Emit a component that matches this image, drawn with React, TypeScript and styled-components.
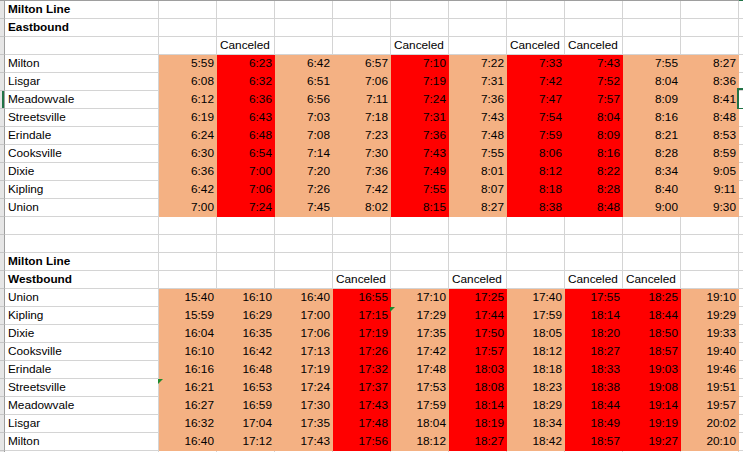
import styled, { createGlobalStyle } from "styled-components";

const GRID = "#d4d4d4";
const SALMON = "#f4b183";
const RED = "#ff0000";
const EXCEL_GREEN = "#217346";
const COLS = "5px 154px repeat(10, 58px) 1fr";

const GlobalStyle = createGlobalStyle`
  body {
    margin: 0;
    background: #fff;
    overflow: hidden;
  }
`;

const Sheet = styled.div`
  display: flex;
  flex-direction: column;
  width: 743px;
  height: 452px;
  overflow: hidden;
  font-family: "Liberation Sans", Arial, sans-serif;
  font-size: 11.8px;
  color: #000;
`;

const EdgeRow = styled.div`
  display: grid;
  grid-template-columns: 739px 1fr;
  height: 1px;
  flex: none;
`;

const EdgePart = styled.div<{ $active?: boolean }>`
  background: ${(p) => (p.$active ? EXCEL_GREEN : "#9e9e9e")};
`;

const Row = styled.div`
  display: grid;
  grid-template-columns: ${COLS};
  height: 18px;
  flex: none;
`;

const RowHead = styled.div<{ $active?: boolean }>`
  box-sizing: border-box;
  background: #e6e6e6;
  border-right: 1px solid #9e9e9e;
  border-bottom: 1px solid #c6c6c6;
  box-shadow: ${(p) => (p.$active ? `inset -2px 0 0 ${EXCEL_GREEN}` : "none")};
`;

const Cell = styled.div<{
  $fill?: string;
  $right?: boolean;
  $bold?: boolean;
  $flag?: boolean;
  $selected?: boolean;
}>`
  position: relative;
  box-sizing: border-box;
  height: 18px;
  padding: 0 2px 0 3px;
  background: ${(p) => p.$fill ?? "#fff"};
  border-right: 1px solid ${(p) => p.$fill ?? GRID};
  border-bottom: 1px solid ${(p) => p.$fill ?? GRID};
  text-align: ${(p) => (p.$right ? "right" : "left")};
  font-weight: ${(p) => (p.$bold ? 700 : 400)};
  line-height: 17px;
  white-space: nowrap;

  &::before {
    content: "";
    display: ${(p) => (p.$flag ? "block" : "none")};
    position: absolute;
    top: 0;
    left: -1px;
    border-top: 5px solid #1e8a2e;
    border-right: 5px solid transparent;
  }

  &::after {
    content: "";
    display: ${(p) => (p.$selected ? "block" : "none")};
    position: absolute;
    top: -3px;
    left: -2px;
    right: -4px;
    bottom: -2px;
    border: 2px solid ${EXCEL_GREEN};
  }
`;

type Block = {
  title: string;
  direction: string;
  canceled: number[];
  // westbound puts its "Canceled" labels on the direction row
  labelsOnDirection?: boolean;
  stops: [string, string[]][];
};

const eastbound: Block = {
  title: "Milton Line",
  direction: "Eastbound",
  canceled: [1, 4, 6, 7],
  stops: [
    ["Milton", ["5:59", "6:23", "6:42", "6:57", "7:10", "7:22", "7:33", "7:43", "7:55", "8:27"]],
    ["Lisgar", ["6:08", "6:32", "6:51", "7:06", "7:19", "7:31", "7:42", "7:52", "8:04", "8:36"]],
    ["Meadowvale", ["6:12", "6:36", "6:56", "7:11", "7:24", "7:36", "7:47", "7:57", "8:09", "8:41"]],
    ["Streetsville", ["6:19", "6:43", "7:03", "7:18", "7:31", "7:43", "7:54", "8:04", "8:16", "8:48"]],
    ["Erindale", ["6:24", "6:48", "7:08", "7:23", "7:36", "7:48", "7:59", "8:09", "8:21", "8:53"]],
    ["Cooksville", ["6:30", "6:54", "7:14", "7:30", "7:43", "7:55", "8:06", "8:16", "8:28", "8:59"]],
    ["Dixie", ["6:36", "7:00", "7:20", "7:36", "7:49", "8:01", "8:12", "8:22", "8:34", "9:05"]],
    ["Kipling", ["6:42", "7:06", "7:26", "7:42", "7:55", "8:07", "8:18", "8:28", "8:40", "9:11"]],
    ["Union", ["7:00", "7:24", "7:45", "8:02", "8:15", "8:27", "8:38", "8:48", "9:00", "9:30"]],
  ],
};

const westbound: Block = {
  title: "Milton Line",
  direction: "Westbound",
  canceled: [3, 5, 7, 8],
  labelsOnDirection: true,
  stops: [
    ["Union", ["15:40", "16:10", "16:40", "16:55", "17:10", "17:25", "17:40", "17:55", "18:25", "19:10"]],
    ["Kipling", ["15:59", "16:29", "17:00", "17:15", "17:29", "17:44", "17:59", "18:14", "18:44", "19:29"]],
    ["Dixie", ["16:04", "16:35", "17:06", "17:19", "17:35", "17:50", "18:05", "18:20", "18:50", "19:33"]],
    ["Cooksville", ["16:10", "16:42", "17:13", "17:26", "17:42", "17:57", "18:12", "18:27", "18:57", "19:40"]],
    ["Erindale", ["16:16", "16:48", "17:19", "17:32", "17:48", "18:03", "18:18", "18:33", "19:03", "19:46"]],
    ["Streetsville", ["16:21", "16:53", "17:24", "17:37", "17:53", "18:08", "18:23", "18:38", "19:08", "19:51"]],
    ["Meadowvale", ["16:27", "16:59", "17:30", "17:43", "17:59", "18:14", "18:29", "18:44", "19:14", "19:57"]],
    ["Lisgar", ["16:32", "17:04", "17:35", "17:48", "18:04", "18:19", "18:34", "18:49", "19:19", "20:02"]],
    ["Milton", ["16:40", "17:12", "17:43", "17:56", "18:12", "18:27", "18:42", "18:57", "19:27", "20:10"]],
  ],
};

// flagged cells (green error triangles): "direction:stop:column"
const flags = new Set(["Westbound:Kipling:4", "Westbound:Streetsville:0"]);
const selected = "Eastbound:Meadowvale";

const blanks = Array.from({ length: 10 });

const LabelRow = ({
  label,
  bold,
  canceled = [],
}: {
  label?: string;
  bold?: boolean;
  canceled?: number[];
}) => (
  <Row>
    <RowHead />
    <Cell $bold={bold}>{label}</Cell>
    {blanks.map((_, i) => (
      <Cell key={i}>{canceled.includes(i) ? "Canceled" : ""}</Cell>
    ))}
    <Cell />
  </Row>
);

const Timetable = ({ block }: { block: Block }) => (
  <>
    <LabelRow label={block.title} bold />
    <LabelRow
      label={block.direction}
      bold
      canceled={block.labelsOnDirection ? block.canceled : []}
    />
    {!block.labelsOnDirection && <LabelRow canceled={block.canceled} />}
    {block.stops.map(([stop, times]) => {
      const isSel = `${block.direction}:${stop}` === selected;
      return (
        <Row key={stop}>
          <RowHead $active={isSel} />
          <Cell>{stop}</Cell>
          {times.map((t, i) => (
            <Cell
              key={i}
              $right
              $fill={block.canceled.includes(i) ? RED : SALMON}
              $flag={flags.has(`${block.direction}:${stop}:${i}`)}
            >
              {t}
            </Cell>
          ))}
          <Cell $selected={isSel} />
        </Row>
      );
    })}
  </>
);

export default function App() {
  return (
    <>
      <GlobalStyle />
      <Sheet>
        <EdgeRow>
          <EdgePart />
          <EdgePart $active />
        </EdgeRow>
        <Timetable block={eastbound} />
        <LabelRow />
        <LabelRow />
        <Timetable block={westbound} />
        <LabelRow />
      </Sheet>
    </>
  );
}
